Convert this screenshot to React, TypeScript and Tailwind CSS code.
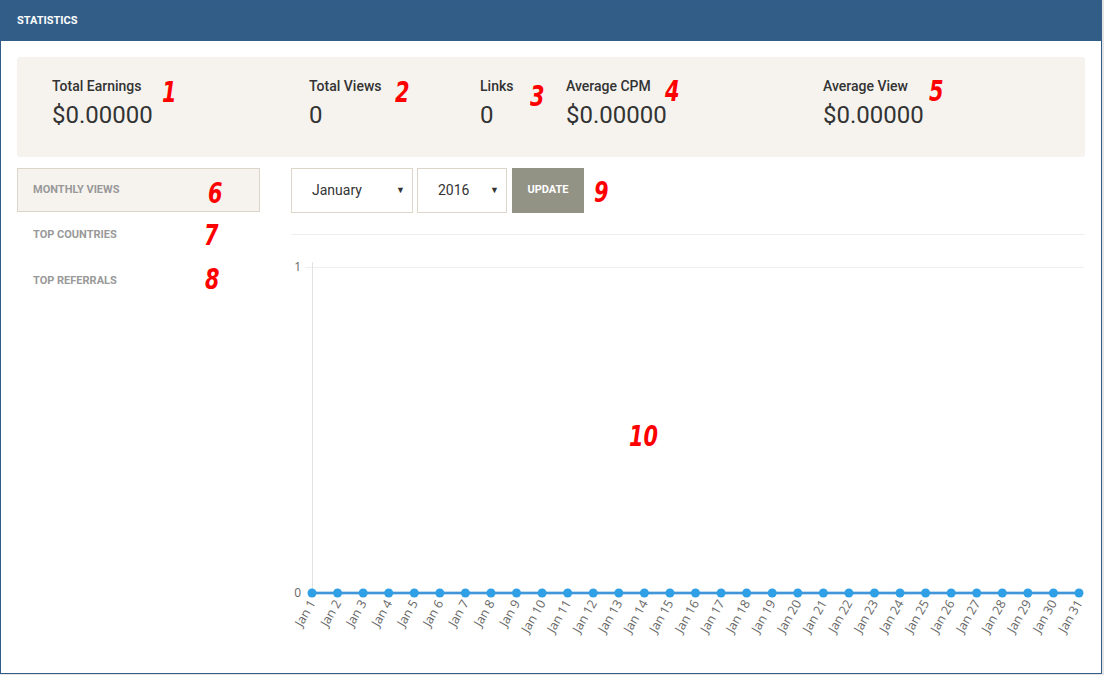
import React from "react";

const roboto = { fontFamily: "Roboto, 'Liberation Sans', sans-serif" };

function Note({ n, x, y }: { n: string; x: number; y: number }) {
  return (
    <span
      className="absolute text-[29px] leading-none italic font-bold text-[#ff0000] origin-left scale-x-[0.8]"
      style={{ left: x, top: y, fontFamily: "'DejaVu Sans Condensed', 'Liberation Sans', sans-serif", fontStretch: "condensed" }}
    >
      {n}
    </span>
  );
}

function Stat({ label, value, w }: { label: string; value: string; w?: string }) {
  return (
    <div className={`${w ?? "flex-1"} flex flex-col`}>
      <div className="text-[14px] font-medium text-[#333] leading-[18px]">{label}</div>
      <div className="text-[24px] text-[#333] leading-[28px] mt-[6px]">{value}</div>
    </div>
  );
}

function Select({ value, w }: { value: string; w: string }) {
  return (
    <div className={`${w} h-[45px] border border-[#ddd5c8] bg-white flex items-center justify-between pl-[20px] pr-[7px] text-[14px] text-[#333]`}>
      <span>{value}</span>
      <span className="text-[9px] text-[#333]">▼</span>
    </div>
  );
}

function Chart() {
  const x0 = 21;
  const step = (788 - 21) / 30;
  const yZero = 358;
  const pts = Array.from({ length: 31 }, (_, i) => x0 + i * step);
  return (
    <svg width={794} height={420} className="block overflow-visible">
      <line x1={14} y1={32.5} x2={793} y2={32.5} stroke="#eeeeee" strokeWidth={1} />
      <line x1={21.5} y1={27} x2={21.5} y2={358} stroke="#e2e2e2" strokeWidth={1} />
      <text x={10} y={36} textAnchor="end" fontSize={12} fill="#666" fontFamily="'Open Sans', sans-serif">1</text>
      <text x={10} y={362} textAnchor="end" fontSize={12} fill="#666" fontFamily="'Open Sans', sans-serif">0</text>
      <line x1={x0} y1={yZero} x2={788} y2={yZero} stroke="#7fbbe8" strokeWidth={3} />
      <line x1={x0} y1={yZero} x2={788} y2={yZero} stroke="#2b8ad3" strokeWidth={1.5} />
      {pts.map((x, i) => (
        <circle key={i} cx={x} cy={yZero} r={4.5} fill="#2f9fe6" />
      ))}
      {pts.map((x, i) => (
        <text
          key={"t" + i}
          x={0}
          y={0}
          textAnchor="end"
          fontSize={12.5}
          fill="#666"
          fontFamily="'Open Sans', sans-serif"
          transform={`translate(${x + 4} ${yZero + 10}) rotate(-60)`}
        >
          {`Jan ${i + 1}`}
        </text>
      ))}
    </svg>
  );
}

export default function App() {
  return (
    <div className="w-[1104px] h-[675px] bg-[#e4e4e4]" style={roboto}>
      <div className="relative w-[1102px] h-[674px] border border-[#335d88] bg-white flex flex-col">
        <div className="h-[40px] bg-[#325d87] flex items-center pl-[16px] text-white text-[11px] font-bold">
          STATISTICS
        </div>
        <div className="px-[16px] pt-[16px]">
          <div className="h-[100px] bg-[#f6f3ef] rounded-[3px] flex items-start pl-[35px] pt-[20px]">
            <Stat label="Total Earnings" value="$0.00000" w="w-[257px]" />
            <Stat label="Total Views" value="0" w="w-[171px]" />
            <Stat label="Links" value="0" w="w-[86px]" />
            <Stat label="Average CPM" value="$0.00000" w="w-[257px]" />
            <Stat label="Average View" value="$0.00000" />
          </div>
          <div className="flex mt-[11px]">
            <div className="w-[243px] flex flex-col text-[11px] font-bold text-[#999] uppercase">
              <div className="h-[44px] border border-[#ddd5c8] bg-[#f6f3ef] flex items-center pl-[15px]">Monthly Views</div>
              <div className="h-[46px] flex items-center pl-[16px]">Top Countries</div>
              <div className="h-[46px] flex items-center pl-[16px]">Top Referrals</div>
            </div>
            <div className="ml-[31px] w-[794px] flex flex-col">
              <div className="flex">
                <Select value="January" w="w-[122px]" />
                <div className="w-[4px]" />
                <Select value="2016" w="w-[90px]" />
                <div className="w-[5px]" />
                <div className="w-[72px] h-[45px] bg-[#929385] text-white text-[11px] font-bold flex items-center justify-center">
                  UPDATE
                </div>
              </div>
              <div className="h-px bg-[#eeeeee] mt-[21px]" />
              <Chart />
            </div>
          </div>
        </div>
        <Note n="1" x={161} y={77} />
        <Note n="2" x={394} y={77} />
        <Note n="3" x={529} y={81} />
        <Note n="4" x={664} y={76} />
        <Note n="5" x={928} y={76} />
        <Note n="6" x={207} y={178} />
        <Note n="7" x={203} y={220} />
        <Note n="8" x={204} y={264} />
        <Note n="9" x={593} y={177} />
        <Note n="10" x={628} y={421} />
      </div>
    </div>
  );
}
